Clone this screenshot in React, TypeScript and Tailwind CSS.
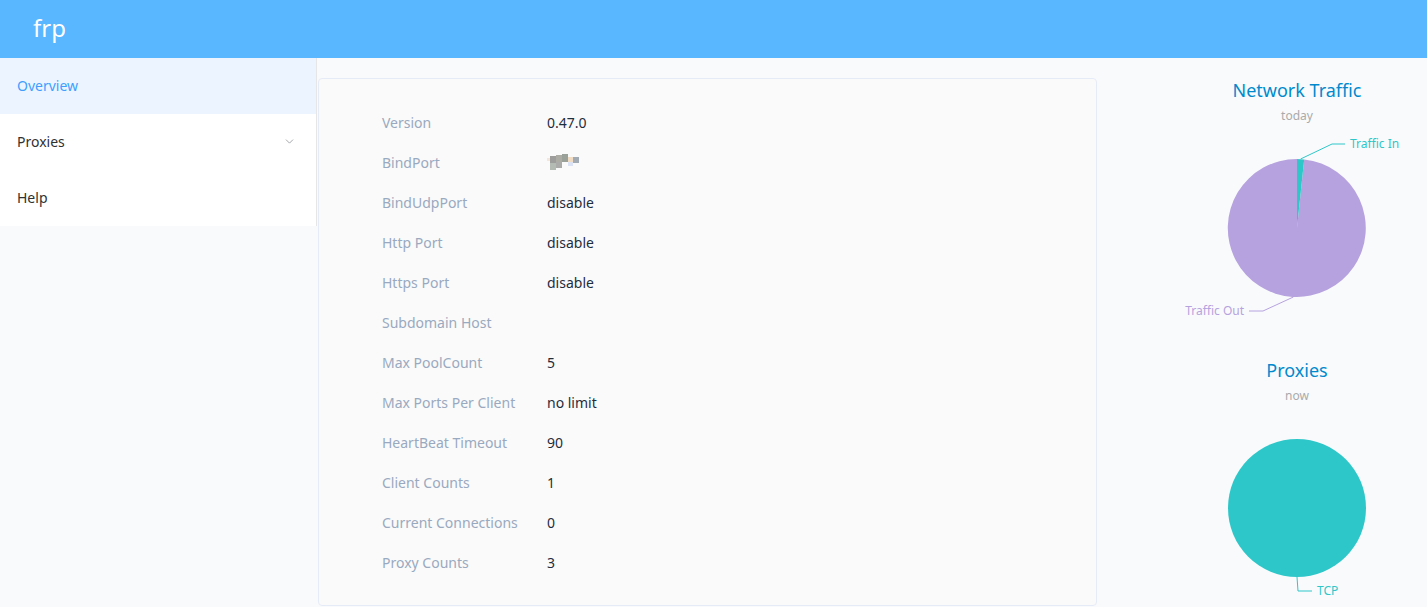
import { ChevronDown } from "lucide-react";

const rows: [string, string | null][] = [
  ["Version", "0.47.0"],
  ["BindPort", null], // 打码的端口
  ["BindUdpPort", "disable"],
  ["Http Port", "disable"],
  ["Https Port", "disable"],
  ["Subdomain Host", ""],
  ["Max PoolCount", "5"],
  ["Max Ports Per Client", "no limit"],
  ["HeartBeat Timeout", "90"],
  ["Client Counts", "1"],
  ["Current Connections", "0"],
  ["Proxy Counts", "3"],
];

// 马赛克
function Mosaic() {
  return (
    <svg width="36" height="18" viewBox="0 0 36 18" className="mt-[2px] block">
      <rect x="0" y="4" width="4" height="3" fill="#f3e6dc" />
      <rect x="3" y="2" width="6" height="7" fill="#9d9d9b" />
      <rect x="9" y="1" width="6" height="7" fill="#acaca4" />
      <rect x="15" y="0" width="6" height="8" fill="#9aa198" />
      <rect x="21" y="3" width="5" height="5" fill="#efdcc3" />
      <rect x="26" y="3" width="6" height="6" fill="#a2aab3" />
      <rect x="3" y="9" width="6" height="7" fill="#b4bbb3" />
      <rect x="9" y="8" width="6" height="6" fill="#ababa9" />
      <rect x="21" y="8" width="5" height="4" fill="#dbe2f3" />
    </svg>
  );
}

function Header({ title, sub }: { title: string; sub: string }) {
  return (
    <div className="flex flex-col items-center">
      <div className="h-[24px] text-[18px] leading-[24px] text-[#008acd]">{title}</div>
      <div className="mt-[6px] h-[16px] text-[12px] leading-[16px] text-[#aaa]">{sub}</div>
    </div>
  );
}

function TrafficChart() {
  return (
    <div className="h-[280px] w-[400px]">
      <Header title="Network Traffic" sub="today" />
      <svg width="400" height="234" viewBox="0 46 400 234" className="block">
        <path d="M200 150 L207.2 81.4 A69 69 0 1 1 200 81 Z" fill="#b6a2de" />
        <path d="M200 150 L200 81 A69 69 0 0 1 207.2 81.4 Z" fill="#2ec7c9" />
        <polyline points="203.6,81 235,66 248,66" fill="none" stroke="#2ec7c9" strokeWidth="1" />
        <text x="253" y="70" fontSize="12" fill="#2ec7c9">Traffic In</text>
        <polyline points="196.4,219 166,233 152,233" fill="none" stroke="#b6a2de" strokeWidth="1" />
        <text x="147" y="237" fontSize="12" fill="#b6a2de" textAnchor="end">Traffic Out</text>
      </svg>
    </div>
  );
}

function ProxyChart() {
  return (
    <div className="h-[280px] w-[400px]">
      <Header title="Proxies" sub="now" />
      <svg width="400" height="234" viewBox="0 46 400 234" className="block">
        <circle cx="200" cy="150" r="69" fill="#2ec7c9" />
        <polyline points="200,219 201,233 215,233" fill="none" stroke="#2ec7c9" strokeWidth="1" />
        <text x="220" y="237" fontSize="12" fill="#2ec7c9">TCP</text>
      </svg>
    </div>
  );
}

export default function App() {
  return (
    <div
      className="h-[607px] overflow-hidden bg-[#f9fafc]"
      style={{ fontFamily: '"Noto Sans", "Noto Sans CJK SC", sans-serif' }}
    >
      <header className="flex h-[58px] items-center bg-[#58b7ff] pl-[33px]">
        <span className="-mt-[3px] text-[24px] text-white">frp</span>
      </header>
      <div className="flex">
        {/* 侧边菜单 */}
        <aside className="w-[317px] shrink-0">
          <nav className="border-r border-[#e6e6e6] bg-white text-[14px]">
            <div className="flex h-[56px] items-center bg-[#ecf5ff] pb-[2px] pl-[17px] text-[#409eff]">Overview</div>
            <div className="flex h-[56px] items-center justify-between pb-[2px] pl-[17px] pr-[20px] text-[#303133]">
              <span>Proxies</span>
              <ChevronDown size={13} strokeWidth={1.5} className="text-[#909399]" />
            </div>
            <div className="flex h-[56px] items-center pb-[2px] pl-[17px] text-[#303133]">Help</div>
          </nav>
        </aside>
        <main className="flex shrink-0 pl-px pt-[20px]">
          <section className="h-[528px] w-[779px] shrink-0 rounded-[4px] border border-[#e6ebf8] bg-[#fafafa] py-[23px] pl-[63px] text-[14px]">
            {rows.map(([label, value]) => (
              <div key={label} className="flex h-[40px] items-center">
                <span className="w-[165px] text-[#99a9bf]">{label}</span>
                <span className="text-[#1f2d3d]">{value === null ? <Mosaic /> : value}</span>
              </div>
            ))}
          </section>
          <div className="w-[400px] shrink-0">
            <TrafficChart />
            <ProxyChart />
          </div>
        </main>
      </div>
    </div>
  );
}
